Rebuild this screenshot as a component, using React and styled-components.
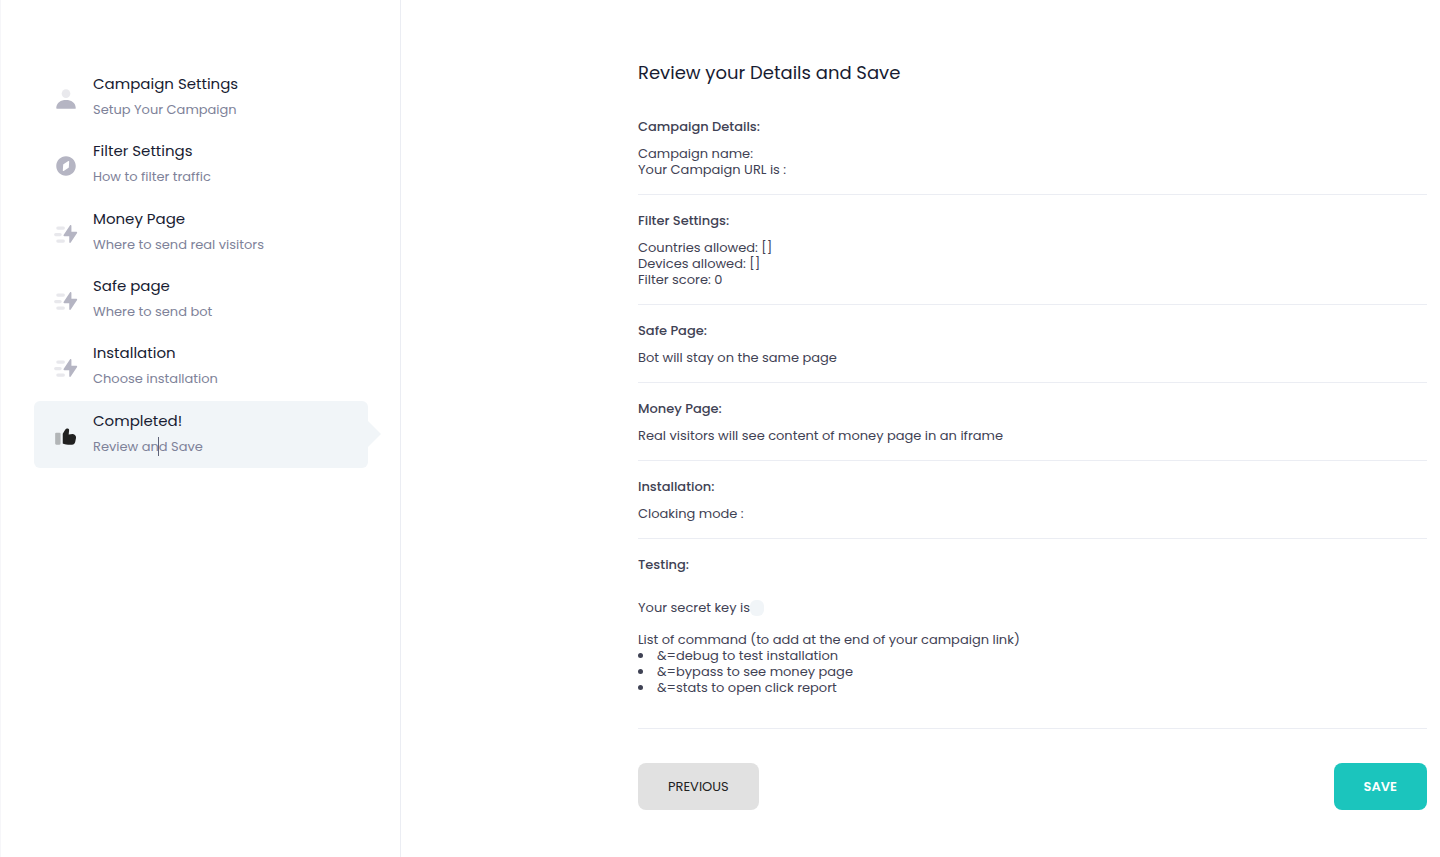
import React from "react";
import styled, { createGlobalStyle, css } from "styled-components";

const GlobalStyle = createGlobalStyle`
  *, *::before, *::after { box-sizing: border-box; }
  body {
    margin: 0;
    background: #fff;
    color: #3f4254;
    font-family: Poppins, Inter, "Open Sans", sans-serif;
    font-size: 13px;
    line-height: 16px;
  }
`;

const Page = styled.div`
  display: flex;
  min-height: 100vh;
  border-left: 1px solid #f6f6f9;
`;

const Aside = styled.nav`
  flex: 0 0 400px;
  padding: 64px 32px 64px 33px;
  border-right: 1px solid #ebedf3;
`;

const Steps = styled.ol`
  display: grid;
  grid-auto-rows: 1fr;
  min-height: 404px;
  margin: 0;
  padding: 0;
  list-style: none;
`;

const Step = styled.li`
  position: relative;
  display: flex;
  align-items: center;
  gap: 14px;
  padding: 0 19px;
  border-radius: 6px;
  color: #b5b5c3;

  ${(p) =>
    p.$active &&
    css`
      background: #f1f5f8;
      color: #212121;

      &::after {
        content: "";
        position: absolute;
        top: calc(50% - 13px);
        left: 100%;
        border: 13px solid transparent;
        border-left-color: #f1f5f8;
        border-right-width: 0;
      }
    `}
`;

const Icon = styled.svg`
  flex: none;
  width: 26px;
  height: 26px;
  margin-top: 3px;
  fill: currentColor;
`;

const StepTitle = styled.div`
  color: #181c32;
  font-size: 15px;
  line-height: 24px;
`;

const StepText = styled.div`
  position: relative;
  color: #7e8299;
  line-height: 27px;
`;

const TextCursor = styled.span`
  position: absolute;
  top: 4px;
  left: 65px;
  width: 1px;
  height: 19px;
  background: #5e6278;
`;

const Content = styled.main`
  flex: 1;
  min-width: 0;
  padding: 60px 13px 47px 237px;
`;

const Heading = styled.h1`
  margin: 0 0 16px;
  color: #181c32;
  font-size: 18px;
  font-weight: 400;
  line-height: 25px;
`;

const Section = styled.section`
  padding: 16px 0;
  border-bottom: 1px solid #ebedf3;
`;

const SectionTitle = styled.h2`
  margin: 0 0 9px;
  font-size: 13px;
  font-weight: 500;
  line-height: 20px;
`;

const Line = styled.div``;

const Testing = styled.div`
  padding: 16px 0;
`;

const KeyLine = styled.div`
  display: flex;
  margin-bottom: 16px;
`;

const KeyBadge = styled.code`
  padding: 0 7px;
  border-radius: 6px;
  background: #f1f5f8;
`;

const Commands = styled.ul`
  margin: 0;
  padding: 0;
  list-style-position: inside;
`;

const Actions = styled.div`
  display: flex;
  justify-content: space-between;
  margin-top: 34px;
`;

const Button = styled.button`
  padding: 13px 30px;
  border: 0;
  border-radius: 8px;
  background: ${(p) => (p.$primary ? "#1bc5bd" : "#e1e1e1")};
  color: ${(p) => (p.$primary ? "#fff" : "#212121")};
  font-family: inherit;
  font-size: 13px;
  font-weight: ${(p) => (p.$primary ? 600 : 400)};
  line-height: 21px;
  text-transform: uppercase;
`;

const icons = {
  user: (
    <>
      <circle cx="12" cy="7" r="4" opacity="0.3" />
      <path d="M3.0007,20.1992 C3.3883,15.4265 7.2619,13 11.9833,13 C16.7712,13 20.7049,15.2932 20.9979,20.2 C21.0096,20.3955 20.9979,21 20.2467,21 L3.7275,21 C3.4767,21 2.9795,20.4592 3.0007,20.1992 Z" />
    </>
  ),
  compass: (
    <path
      fillRule="evenodd"
      d="M12,21 C7.0294,21 3,16.9706 3,12 C3,7.0294 7.0294,3 12,3 C16.9706,3 21,7.0294 21,12 C21,16.9706 16.9706,21 12,21 Z M14.1655,7.3548 L9.6106,10.3623 C9.4792,10.449 9.3964,10.5925 9.3869,10.7496 L9.0599,16.1979 C9.0434,16.4736 9.2534,16.7105 9.5291,16.727 C9.6371,16.7335 9.7442,16.7048 9.8345,16.6452 L14.3894,13.6377 C14.5208,13.551 14.6036,13.4075 14.6131,13.2504 L14.9401,7.8021 C14.9566,7.5264 14.7466,7.2895 14.4709,7.273 C14.3629,7.2665 14.2558,7.2952 14.1655,7.3548 Z"
    />
  ),
  bolt: (
    <>
      <path d="M16.374,19.9389 L22.2226,11.166 C22.4524,10.8214 22.3593,10.3557 22.0146,10.126 C21.8914,10.0438 21.7467,10 21.5986,10 L17,10 L17,4.4771 C17,4.0629 16.6642,3.7271 16.25,3.7271 C15.9992,3.7271 15.7651,3.8524 15.626,4.0611 L9.7774,12.834 C9.5476,13.1786 9.6407,13.6443 9.9854,13.874 C10.1086,13.9562 10.2533,14 10.4014,14 L15,14 L15,19.5229 C15,19.9371 15.3358,20.2729 15.75,20.2729 C16.0008,20.2729 16.2349,20.1476 16.374,19.9389 Z" />
      <g opacity="0.3">
        <rect x="3" y="5" width="8" height="3" rx="1.5" />
        <rect x="1" y="11" width="7" height="3" rx="1.5" />
        <rect x="3" y="17" width="8" height="3" rx="1.5" />
      </g>
    </>
  ),
  like: (
    <>
      <path d="M9,10 L9,19 L10.1526,19.3842 C11.3762,19.7921 12.6575,20 13.9473,20 L17.5406,20 C18.9706,20 20.2019,18.9906 20.4823,17.5883 L21.2315,13.8424 C21.5565,12.2177 20.5028,10.6372 18.8781,10.3123 C18.6189,10.2604 18.354,10.2431 18.0902,10.2607 L14.5,10.5 L14.8642,6.4938 C14.9327,5.7404 14.3774,5.0741 13.624,5.0056 C13.5828,5.0019 13.5414,5 13.5,5 C12.5694,5 11.707,5.4883 11.2283,6.2862 L9,10 Z" />
      <rect x="2" y="9" width="5" height="11" rx="1" opacity="0.3" />
    </>
  ),
};

const steps = [
  { icon: "user", title: "Campaign Settings", text: "Setup Your Campaign" },
  { icon: "compass", title: "Filter Settings", text: "How to filter traffic" },
  { icon: "bolt", title: "Money Page", text: "Where to send real visitors" },
  { icon: "bolt", title: "Safe page", text: "Where to send bot" },
  { icon: "bolt", title: "Installation", text: "Choose installation" },
  { icon: "like", title: "Completed!", text: "Review and Save", active: true },
];

const sections = [
  { title: "Campaign Details:", lines: ["Campaign name:", "Your Campaign URL is :"] },
  { title: "Filter Settings:", lines: ["Countries allowed: []", "Devices allowed: []", "Filter score: 0"] },
  { title: "Safe Page:", lines: ["Bot will stay on the same page"] },
  { title: "Money Page:", lines: ["Real visitors will see content of money page in an iframe"] },
  { title: "Installation:", lines: ["Cloaking mode :"] },
];

const commands = [
  "&=debug to test installation",
  "&=bypass to see money page",
  "&=stats to open click report",
];

export default function App() {
  return (
    <>
      <GlobalStyle />
      <Page>
        <Aside>
          <Steps>
            {steps.map((s) => (
              <Step key={s.title} $active={s.active} aria-current={s.active ? "step" : undefined}>
                <Icon viewBox="0 0 24 24" aria-hidden="true">{icons[s.icon]}</Icon>
                <div>
                  <StepTitle>{s.title}</StepTitle>
                  <StepText>
                    {s.text}
                    {s.active && <TextCursor />}
                  </StepText>
                </div>
              </Step>
            ))}
          </Steps>
        </Aside>
        <Content>
          <Heading>Review your Details and Save</Heading>
          {sections.map((s) => (
            <Section key={s.title}>
              <SectionTitle>{s.title}</SectionTitle>
              {s.lines.map((l) => (
                <Line key={l}>{l}</Line>
              ))}
            </Section>
          ))}
          <Section>
            <SectionTitle>Testing:</SectionTitle>
            <Testing>
              <KeyLine>
                Your secret key is
                <KeyBadge />
              </KeyLine>
              <Line>List of command (to add at the end of your campaign link)</Line>
              <Commands>
                {commands.map((c) => (
                  <li key={c}>{c}</li>
                ))}
              </Commands>
            </Testing>
          </Section>
          <Actions>
            <Button type="button">Previous</Button>
            <Button type="button" $primary>Save</Button>
          </Actions>
        </Content>
      </Page>
    </>
  );
}
